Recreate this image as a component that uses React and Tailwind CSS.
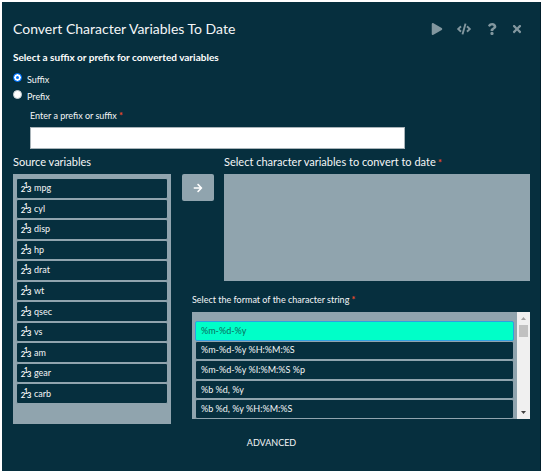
import { useState } from "react";
import { FaPlay, FaCode, FaQuestion, FaTimes, FaArrowRight } from "react-icons/fa";

const variables = ["mpg", "cyl", "disp", "hp", "drat", "wt", "qsec", "vs", "am", "gear", "carb"];
const formats = ["%m-%d-%y", "%m-%d-%y %H:%M:%S", "%m-%d-%y %I:%M:%S %p", "%b %d, %y", "%b %d, %y %H:%M:%S"];

function Required() {
  return <span className="text-[9px] leading-none font-bold text-[#f04a2a]"> *</span>;
}

function NumericIcon() {
  return (
    <span aria-hidden="true" className="flex h-[14px] shrink-0 pt-[1px] pb-[2px] text-[8px] leading-[8px] font-bold">
      <span className="flex w-[4px] justify-center self-end">2</span>
      <span className="flex w-[2px] justify-center self-start text-[7px] leading-[7px]">1</span>
      <span className="flex w-[4px] justify-center self-end">3</span>
    </span>
  );
}

function RadioOption({ value, label, selected, onSelect }) {
  return (
    <label className="flex h-[17px] items-start gap-[5px]">
      <input
        type="radio"
        name="affix"
        value={value}
        checked={selected === value}
        onChange={() => onSelect(value)}
        className="size-[9px] shrink-0 appearance-none rounded-full border border-[#c9d1d4] bg-white checked:border-[#0075ff] checked:bg-[#0075ff] checked:inset-ring-2 checked:inset-ring-white"
      />
      <span className="text-[9px] leading-[14px]">{label}</span>
    </label>
  );
}

export default function App() {
  const [affix, setAffix] = useState("suffix");
  const [format, setFormat] = useState(formats[0]);

  return (
    <div className="bg-white p-[2px] font-[Lato,sans-serif] text-[#f4f6f7]">
      <main className="border-r border-[#021f2c] bg-[#062f3e] pt-[18px] pr-[10px] pb-[22px] pl-[11px]">
        <header className="flex h-[18px] items-center justify-between pr-[2px]">
          <h1 className="text-[14px] leading-[18px]">Convert Character Variables To Date</h1>
          <div className="flex items-center text-[#82979f]">
            <button type="button" aria-label="Run" className="flex w-[26px] justify-center">
              <FaPlay size={12} />
            </button>
            <button type="button" aria-label="Show code" className="flex w-[27px] justify-center">
              <FaCode size={14} />
            </button>
            <button type="button" aria-label="Help" className="flex w-[29px] justify-center">
              <FaQuestion size={12} />
            </button>
            <button type="button" aria-label="Close" className="flex w-[22px] justify-center">
              <FaTimes size={12} />
            </button>
          </div>
        </header>

        <fieldset className="mt-[11px]">
          <legend className="text-[10px] leading-[16px] font-bold text-white">
            Select a suffix or prefix for converted variables
          </legend>
          <div className="pt-[8px]">
            <RadioOption value="suffix" label="Suffix" selected={affix} onSelect={setAffix} />
            <RadioOption value="prefix" label="Prefix" selected={affix} onSelect={setAffix} />
          </div>
        </fieldset>

        <div className="mt-[3px] pr-[125px] pl-[17px]">
          <label htmlFor="affix-text" className="block text-[9px] leading-[12px]">
            Enter a prefix or suffix
            <Required />
          </label>
          <input
            id="affix-text"
            type="text"
            className="mt-[5px] block h-[22px] w-full border border-[#a9b4b9] bg-white px-[6px] text-[10px] text-black"
          />
        </div>

        <div className="mt-[5px] flex">
          <section className="w-[158px] shrink-0">
            <h2 className="text-[11px] leading-[16px]">Source variables</h2>
            <div className="mt-[4px] h-[250px] bg-[#90a4ae] px-[3px] pt-[4px]">
              <ul className="flex h-[226px] flex-col">
                {variables.map((name) => (
                  <li
                    key={name}
                    className="flex flex-1 items-center gap-[3px] rounded-xs border border-[#90a4ae] bg-[#062f3e] pl-[4px] text-[9px] leading-[12px]"
                  >
                    <NumericIcon />
                    {name}
                  </li>
                ))}
              </ul>
            </div>
          </section>

          <div className="min-w-0 flex-1 pl-[11px]">
            <div className="flex gap-[10px]">
              <button
                type="button"
                aria-label="Move to target"
                className="mt-[20px] flex h-[27px] w-[32px] shrink-0 items-center justify-center rounded-xs bg-[#90a4ae] text-white"
              >
                <FaArrowRight size={10} />
              </button>
              <section className="min-w-0 flex-1">
                <h2 className="text-[11px] leading-[16px]">
                  Select character variables to convert to date
                  <Required />
                </h2>
                <div className="mt-[4px] h-[107px] bg-[#90a4ae]" />
              </section>
            </div>

            <section className="mt-[13px] pl-[10px]">
              <h2 id="format-label" className="text-[9px] leading-[12px]">
                Select the format of the character string
                <Required />
              </h2>
              <div className="mt-[6px] flex h-[107px] overflow-hidden bg-[#90a4ae]">
                <ul role="listbox" aria-labelledby="format-label" className="flex min-w-0 flex-1 flex-col pt-[9px] pr-[3px] pl-[3px]">
                  {formats.map((item) => (
                    <li
                      key={item}
                      role="option"
                      aria-selected={format === item}
                      onClick={() => setFormat(item)}
                      className="flex flex-1 items-center rounded-xs border border-[#90a4ae] bg-[#062f3e] pl-[5px] text-[9px] leading-[12px] aria-selected:border-[#2fa0e0] aria-selected:bg-[#00ffc8] aria-selected:text-[#0a6b5c]"
                    >
                      {item}
                    </li>
                  ))}
                </ul>
                <div aria-hidden="true" className="flex w-[13px] flex-col items-center justify-between bg-[#f0f0f0] px-[2px]">
                  <div className="flex w-full flex-col items-center">
                    <svg viewBox="0 0 5 3" className="my-[5px] h-[3px] w-[5px] fill-[#a0a0a0]">
                      <path d="M0 3 2.500 0 5 3z" />
                    </svg>
                    <div className="h-[12px] w-full bg-[#c1c1c1]" />
                  </div>
                  <svg viewBox="0 0 5 3" className="my-[5px] h-[3px] w-[5px] fill-[#404040]">
                    <path d="M0 0h5L2.500 3z" />
                  </svg>
                </div>
              </div>
            </section>
          </div>
        </div>

        <div className="mt-[13px] flex justify-center">
          <button type="button" className="text-[9px] leading-[12px]">
            ADVANCED
          </button>
        </div>
      </main>
    </div>
  );
}
